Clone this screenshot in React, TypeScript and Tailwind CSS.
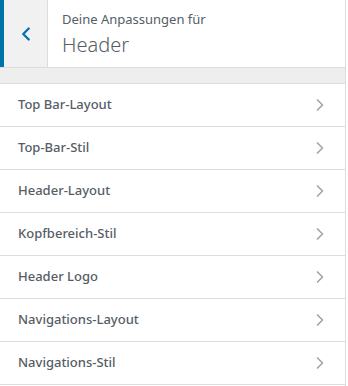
import { ChevronLeft, ChevronRight } from 'lucide-react';

const SECTIONS = [
  'Top Bar-Layout',
  'Top-Bar-Stil',
  'Header-Layout',
  'Kopfbereich-Stil',
  'Header Logo',
  'Navigations-Layout',
  'Navigations-Stil',
];

export default function App() {
  return (
    <div
      className="w-[348px] h-[386px] bg-white overflow-hidden"
      style={{ fontFamily: '"Noto Sans", "Open Sans", sans-serif' }}
    >
      <div className="w-[346px] h-full border-r border-[#dddddd] bg-white">
        {/* panel header */}
        <div className="flex h-[68px] border-b border-[#dddddd]">
          <div className="w-[48px] flex items-center justify-center bg-[#f1f1f1] border-l-4 border-[#0073aa] border-r border-r-[#dddddd]">
            <ChevronLeft size={22} strokeWidth={2.5} className="text-[#0073aa]" />
          </div>
          <div className="flex flex-col pl-[14px] pt-[10px]">
            <span className="text-[13px] leading-[18px] text-[#555d66]">Deine Anpassungen für</span>
            <span className="text-[20px] leading-[28px] font-light text-[#555d66] mt-[3px]">Header</span>
          </div>
        </div>

        {/* spacer band */}
        <div className="h-[16px] bg-[#eeeeee] border-b border-[#dddddd]" />

        {/* sections */}
        <ul>
          {SECTIONS.map((s) => (
            <li
              key={s}
              className="h-[43px] flex items-center justify-between pl-[18px] pr-[15px] border-b border-[#dddddd]"
            >
              <span className="text-[13px] font-medium text-[#555d66]">{s}</span>
              <ChevronRight size={20} strokeWidth={2} className="text-[#a0a5aa]" />
            </li>
          ))}
        </ul>
      </div>
    </div>
  );
}
